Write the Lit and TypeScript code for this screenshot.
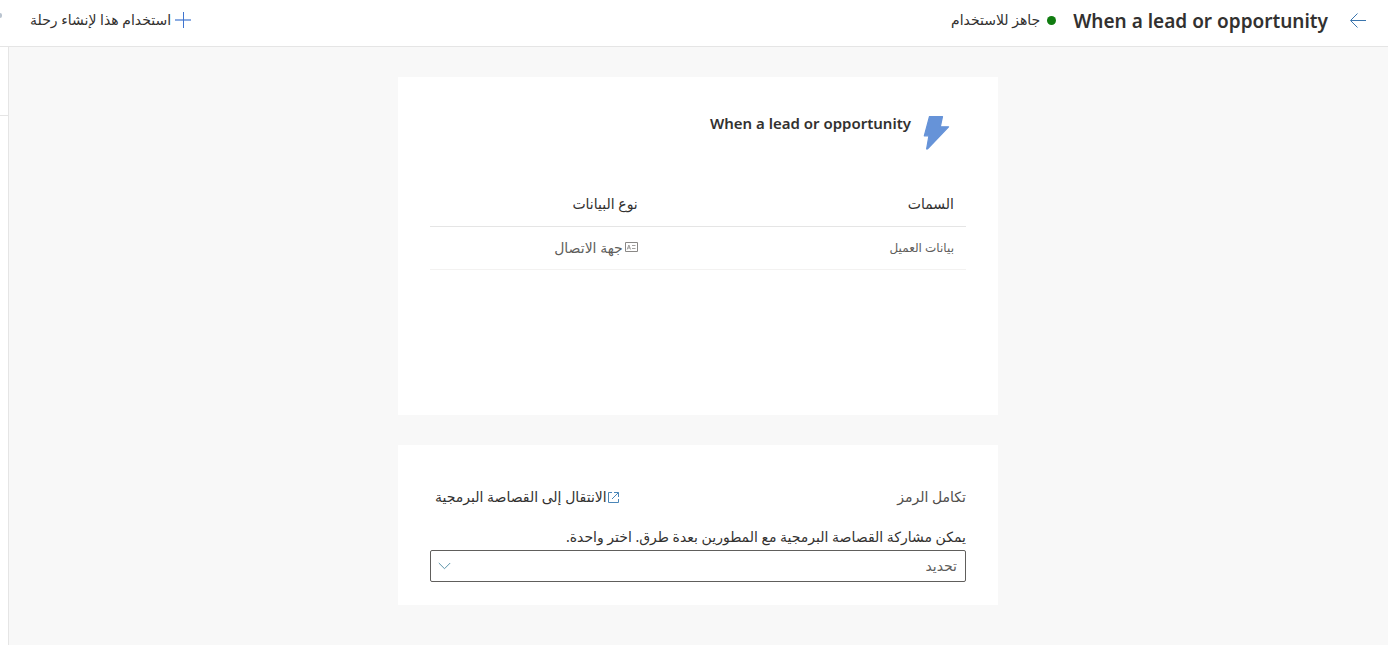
import { LitElement, html, css } from "lit";
import { customElement } from "lit/decorators.js";

@customElement("app-root")
export class AppRoot extends LitElement {
  static styles = css`
    :host {
      display: flex;
      flex-direction: column;
      min-height: 100vh;
      background: #f8f8f8;
      color: #323130;
      font-family: "Segoe UI", "Noto Sans", "DejaVu Sans", sans-serif;
      font-size: 14px;
      line-height: 20px;
    }
    * {
      box-sizing: border-box;
    }
    button {
      font: inherit;
      color: inherit;
      background: none;
      border: 0;
      padding: 0;
      cursor: pointer;
    }
    svg {
      display: block;
      flex: none;
    }
    .bar {
      display: flex;
      align-items: center;
      height: 47px;
      padding: 0 22px 6px 0;
      background: #fff;
      border-bottom: 1px solid #e5e5e5;
    }
    .title {
      margin: 0 22px 0 17px;
      padding-top: 2px;
      font-size: 19px;
      line-height: 28px;
      font-weight: 600;
    }
    .status {
      display: flex;
      align-items: center;
      gap: 7px;
    }
    .dot {
      width: 9px;
      height: 9px;
      border-radius: 50%;
      background: #107c10;
    }
    .create {
      display: flex;
      align-items: center;
      gap: 4px;
      margin-inline-start: auto;
    }
    .edge {
      width: 2px;
      height: 5px;
      margin-inline-start: 28px;
      margin-bottom: 10px;
      border-radius: 0 2px 2px 0;
      background: #b9c3cf;
    }
    .body {
      display: flex;
      flex: 1;
    }
    .content {
      flex: 1;
      display: flex;
      flex-direction: column;
      align-items: center;
      gap: 30px;
      padding: 30px 16px 40px 15px;
    }
    .side {
      width: 9px;
      background: #fff;
      border-right: 1px solid #e5e5e5;
    }
    .side-head {
      height: 69px;
      border-bottom: 1px solid #e5e5e5;
    }
    .card {
      width: 100%;
      max-width: 600px;
      padding: 32px;
      background: #fff;
    }
    .trigger {
      min-height: 338px;
    }
    .name {
      display: flex;
      align-items: flex-start;
      gap: 12px;
      padding: 4px 16px 0 0;
    }
    .name h2 {
      margin: 0;
      font-size: 15px;
      line-height: 20px;
      font-weight: 600;
    }
    .bolt {
      margin-top: 2px;
    }
    table {
      width: 100%;
      margin-top: 33px;
      border-collapse: collapse;
      table-layout: fixed;
    }
    th,
    td {
      height: 43px;
      padding: 0 12px;
      text-align: start;
    }
    th {
      font-weight: 500;
      border-bottom: 1px solid #e5e5e5;
    }
    td {
      color: #605e5c;
      border-bottom: 1px solid #f3f2f1;
    }
    .attr {
      width: 59%;
    }
    .small {
      font-size: 12px;
    }
    .type {
      display: flex;
      align-items: center;
      gap: 2px;
    }
    .code {
      padding-top: 42px;
      padding-bottom: 23px;
    }
    .row {
      display: flex;
      justify-content: space-between;
      align-items: center;
    }
    .row h3 {
      margin: 0;
      font-size: 14px;
      line-height: 20px;
      font-weight: 500;
      color: #504e4c;
    }
    a {
      display: flex;
      align-items: center;
      gap: 1px;
      padding-left: 5px;
      color: inherit;
      text-decoration: none;
    }
    .hint {
      display: block;
      margin-top: 20px;
      padding-bottom: 3px;
    }
    .field {
      display: grid;
      align-items: center;
    }
    .field > * {
      grid-area: 1 / 1;
    }
    select {
      appearance: none;
      width: 100%;
      height: 32px;
      padding: 0 8px;
      font: inherit;
      color: #605e5c;
      background: #fff;
      border: 1px solid #605e5c;
      border-radius: 2px;
    }
    .chevron {
      justify-self: end;
      margin-left: 8px;
      pointer-events: none;
    }
  `;

  render() {
    return html`
      <header class="bar" dir="rtl">
        <button aria-label="رجوع">
          <svg width="16" height="16" viewBox="0 0 16 16" fill="none" stroke="#3b75ad">
            <path d="M16 8.5H1M7.500 1.500l-7 7 7 7" />
          </svg>
        </button>
        <h1 class="title" dir="ltr">When a lead or opportunity</h1>
        <div class="status"><span class="dot"></span>جاهز للاستخدام</div>
        <button class="create">
          <svg width="16" height="16" viewBox="0 0 16 16" fill="none" stroke="#3f74cf">
            <path d="M0 8H16" stroke-width="2" stroke-opacity=".6" />
            <path d="M8.5 0V16" />
          </svg>
          استخدام هذا لإنشاء رحلة
        </button>
        <span class="edge"></span>
      </header>
      <div class="body" dir="rtl">
        <main class="content">
          <section class="card trigger">
            <div class="name">
              <svg class="bolt" width="27" height="35" viewBox="0 0 27 35">
                <path
                  d="M6.500 1.500H19.500L17.300 11.800H25.600L4.400 34H3.600L5.900 20.800H1.300Z"
                  fill="#6693d8"
                  stroke="#6693d8"
                  stroke-width="1.2"
                  stroke-linejoin="round"
                />
              </svg>
              <h2 dir="ltr">When a lead or opportunity</h2>
            </div>
            <table>
              <thead>
                <tr>
                  <th class="attr" scope="col">السمات</th>
                  <th scope="col">نوع البيانات</th>
                </tr>
              </thead>
              <tbody>
                <tr>
                  <td class="small">بيانات العميل</td>
                  <td>
                    <span class="type">
                      <svg width="13" height="11" viewBox="0 0 13 11" fill="none" stroke="#8a8886">
                        <path d="M.5.5h12v9H.5z" />
                        <path d="M2.200 7.500 3.900 3l1.700 4.500M2.800 6H5M7 3.500h3.500M7 6.500h3.500" stroke-width=".8" />
                      </svg>
                      جهة الاتصال
                    </span>
                  </td>
                </tr>
              </tbody>
            </table>
          </section>
          <section class="card code">
            <div class="row">
              <h3>تكامل الرمز</h3>
              <a href="#snippet">
                <svg width="11" height="11" viewBox="0 0 11 11" fill="none" stroke="#4a86b8">
                  <path d="M4 .5H.5v10h10V7M6 .5h4.500V5M10.500 .5 4 7" />
                </svg>
                الانتقال إلى القصاصة البرمجية
              </a>
            </div>
            <label class="hint" for="share">يمكن مشاركة القصاصة البرمجية مع المطورين بعدة طرق. اختر واحدة.</label>
            <div class="field">
              <select id="share">
                <option>تحديد</option>
              </select>
              <svg class="chevron" width="13" height="8" viewBox="0 0 13 8" fill="none" stroke="#5b93a8">
                <path d="M.8 1 6.500 6.700 12.200 1" />
              </svg>
            </div>
          </section>
        </main>
        <aside class="side"><div class="side-head"></div></aside>
      </div>
    `;
  }
}
